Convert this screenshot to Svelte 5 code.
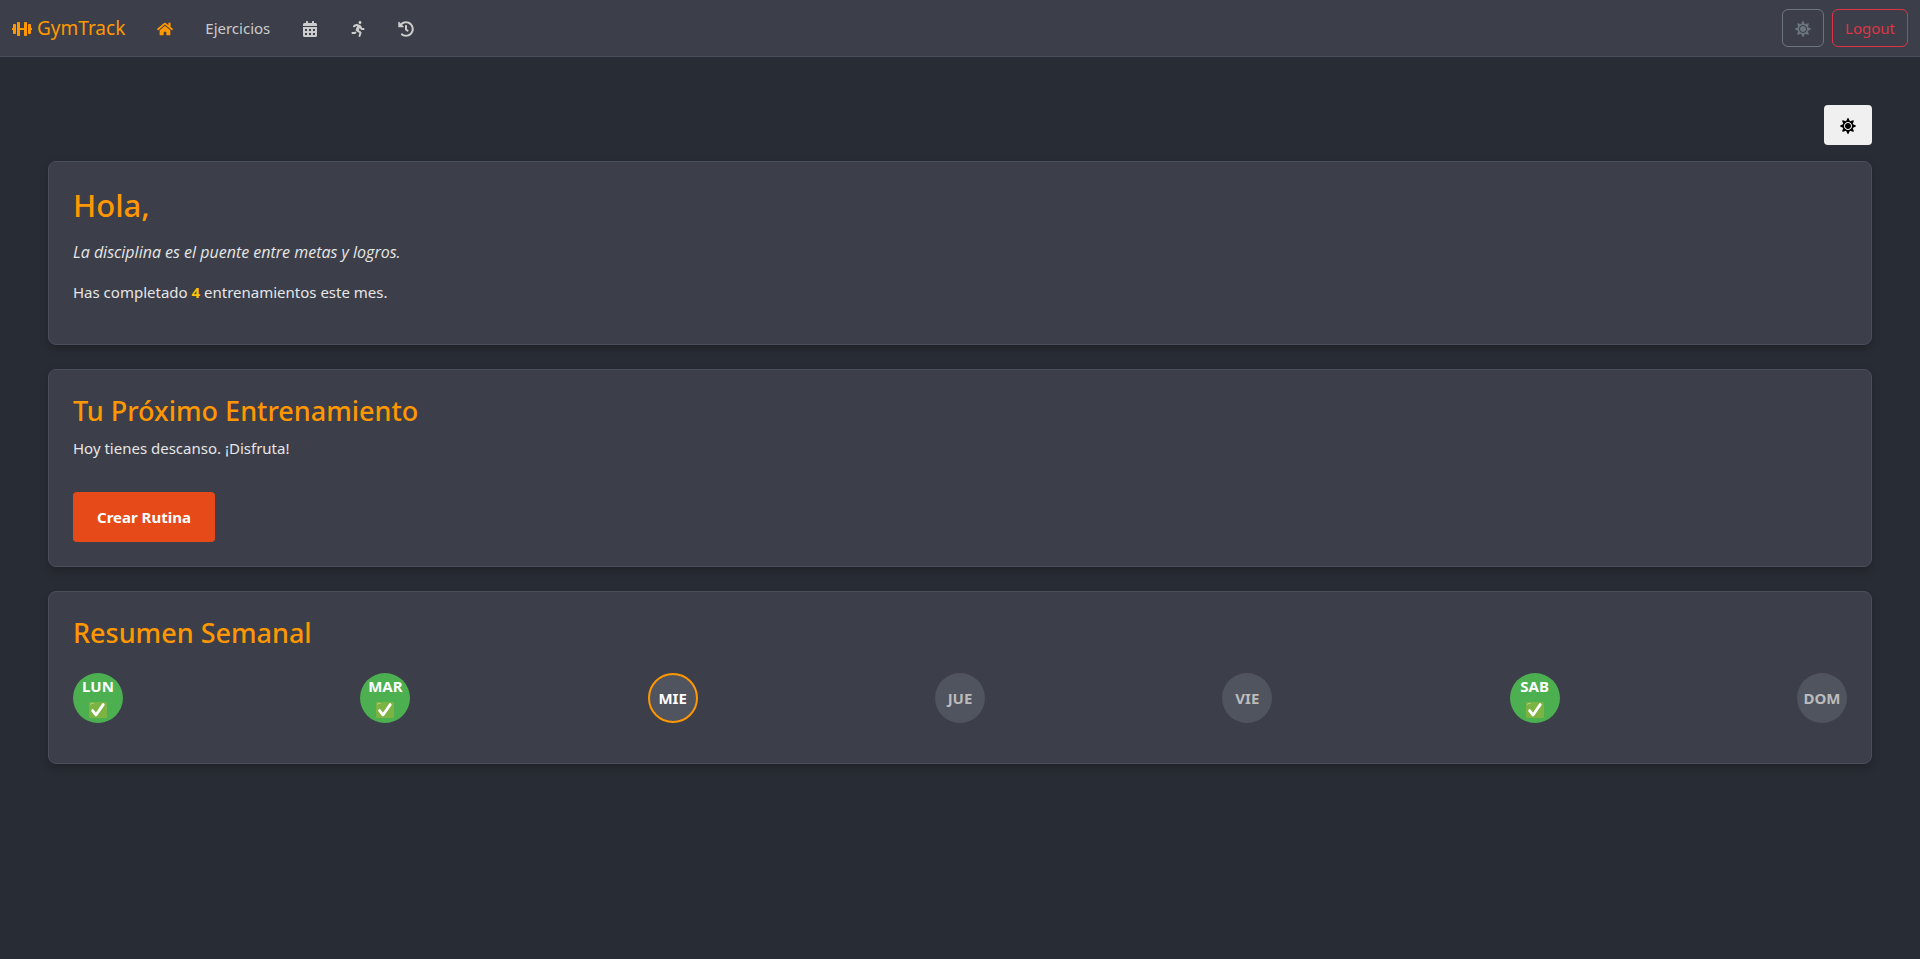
<script>
  const icons = {
    dumbbell: {
      w: 640,
      d: 'M104 96H56c-13.3 0-24 10.7-24 24v104H8c-4.4 0-8 3.6-8 8v48c0 4.4 3.6 8 8 8h24v104c0 13.3 10.7 24 24 24h48c13.3 0 24-10.7 24-24V120c0-13.3-10.7-24-24-24zm528 128h-24V120c0-13.3-10.7-24-24-24h-48c-13.3 0-24 10.7-24 24v272c0 13.3 10.7 24 24 24h48c13.3 0 24-10.7 24-24V288h24c4.4 0 8-3.6 8-8v-48c0-4.4-3.6-8-8-8zM456 32h-48c-13.3 0-24 10.7-24 24v168H256V56c0-13.3-10.7-24-24-24h-48c-13.3 0-24 10.7-24 24v400c0 13.3 10.7 24 24 24h48c13.3 0 24-10.7 24-24V288h128v168c0 13.3 10.7 24 24 24h48c13.3 0 24-10.7 24-24V56c0-13.3-10.7-24-24-24z'
    },
    home: {
      w: 576,
      d: 'M280.37 148.26L96 300.11V464a16 16 0 0 0 16 16l112.06-.29a16 16 0 0 0 15.92-16V368a16 16 0 0 1 16-16h64a16 16 0 0 1 16 16v95.64a16 16 0 0 0 16 16.05L464 480a16 16 0 0 0 16-16V300L295.67 148.26a12.19 12.19 0 0 0-15.3 0zM571.6 251.47L488 182.56V44.05a12 12 0 0 0-12-12h-56a12 12 0 0 0-12 12v72.61L318.47 43a48 48 0 0 0-61 0L4.34 251.47a12 12 0 0 0-1.6 16.9l25.5 31A12 12 0 0 0 45.15 301l235.22-193.74a12.19 12.19 0 0 1 15.3 0L530.9 301a12 12 0 0 0 16.9-1.6l25.5-31a12 12 0 0 0-1.7-16.93z'
    },
    calendar: {
      w: 448,
      d: 'M0 464c0 26.5 21.5 48 48 48h352c26.5 0 48-21.5 48-48V192H0v272zm320-196c0-6.6 5.4-12 12-12h40c6.6 0 12 5.4 12 12v40c0 6.6-5.4 12-12 12h-40c-6.6 0-12-5.4-12-12v-40zm0 128c0-6.6 5.4-12 12-12h40c6.6 0 12 5.4 12 12v40c0 6.6-5.4 12-12 12h-40c-6.6 0-12-5.4-12-12v-40zM192 268c0-6.6 5.4-12 12-12h40c6.6 0 12 5.4 12 12v40c0 6.6-5.4 12-12 12h-40c-6.6 0-12-5.4-12-12v-40zm0 128c0-6.6 5.4-12 12-12h40c6.6 0 12 5.4 12 12v40c0 6.6-5.4 12-12 12h-40c-6.6 0-12-5.4-12-12v-40zM64 268c0-6.6 5.4-12 12-12h40c6.6 0 12 5.4 12 12v40c0 6.6-5.4 12-12 12H76c-6.6 0-12-5.4-12-12v-40zm0 128c0-6.6 5.4-12 12-12h40c6.6 0 12 5.4 12 12v40c0 6.6-5.4 12-12 12H76c-6.6 0-12-5.4-12-12v-40zM400 64h-48V16c0-8.8-7.2-16-16-16h-32c-8.8 0-16 7.2-16 16v48H160V16c0-8.8-7.2-16-16-16h-32c-8.8 0-16 7.2-16 16v48H48C21.5 64 0 85.5 0 112v48h448v-48c0-26.5-21.5-48-48-48z'
    },
    running: {
      w: 416,
      d: 'M272 96c26.51 0 48-21.49 48-48S298.51 0 272 0s-48 21.49-48 48 21.49 48 48 48zM113.69 317.47l-14.8 34.52H32c-17.67 0-32 14.33-32 32s14.33 32 32 32h77.45c19.25 0 36.58-11.44 44.11-29.09l8.79-20.52-10.67-6.3c-17.32-10.23-30.06-25.37-37.99-42.61zM384 223.99h-44.03l-26.06-53.25c-12.5-25.55-35.45-44.23-61.78-50.94l-71.08-21.14c-28.3-6.8-57.77-.55-80.84 17.14l-39.67 30.41c-14.03 10.75-16.69 30.83-5.94 44.86s30.84 16.69 44.86 5.94l39.67-30.41c7.67-5.89 17.44-8 25.27-6.14l14.7 4.37-37.46 87.39c-12.62 29.48-1.31 64.01 26.3 80.31l84.98 50.17-27.47 87.73c-5.28 16.86 4.11 34.82 20.97 40.1 3.19 1 6.41 1.48 9.58 1.48 13.61 0 26.23-8.77 30.52-22.45l31.64-101.06c5.91-20.77-2.89-43.08-21.64-54.39l-61.24-36.14 31.31-78.28 20.27 41.43c8 16.34 24.92 26.89 43.11 26.89H384c17.67 0 32-14.33 32-32s-14.33-31.99-32-31.99z'
    },
    history: {
      w: 512,
      d: 'M504 255.531c.253 136.64-111.18 248.372-247.82 248.468-59.015.042-113.223-20.53-155.822-54.911-11.077-8.94-11.905-25.541-1.839-35.607l11.267-11.267c8.609-8.609 22.353-9.551 31.891-1.984C173.062 425.135 212.781 440 256 440c101.705 0 184-82.311 184-184 0-101.705-82.311-184-184-184-48.814 0-93.149 18.969-126.068 49.932l50.754 50.754c10.08 10.08 2.941 27.314-11.313 27.314H24c-8.837 0-16-7.163-16-16V38.627c0-14.254 17.234-21.393 27.314-11.314l49.372 49.372C129.209 34.136 189.552 8 256 8c136.81 0 247.747 110.78 248 247.531zm-180.912 78.784l9.823-12.63c8.138-10.463 6.253-25.542-4.21-33.679L288 256.349V152c0-13.255-10.745-24-24-24h-16c-13.255 0-24 10.745-24 24v135.651l65.409 50.874c10.463 8.137 25.541 6.253 33.679-4.21z'
    },
    sun: {
      w: 512,
      d: 'M256 160c-52.9 0-96 43.1-96 96s43.1 96 96 96 96-43.1 96-96-43.1-96-96-96zm246.4 80.5l-94.7-47.3 33.5-100.4c4.5-13.6-8.4-26.5-21.9-21.9l-100.4 33.5-47.4-94.8c-6.4-12.8-24.6-12.8-31 0l-47.3 94.7L92.7 70.8c-13.6-4.5-26.5 8.4-21.9 21.9l33.5 100.4-94.7 47.4c-12.8 6.4-12.8 24.6 0 31l94.7 47.3-33.5 100.5c-4.5 13.6 8.4 26.5 21.9 21.9l100.4-33.5 47.3 94.7c6.4 12.8 24.6 12.8 31 0l47.3-94.7 100.4 33.5c13.6 4.5 26.5-8.4 21.9-21.9l-33.5-100.4 94.7-47.3c13-6.5 13-24.7.2-31.1zm-155.9 106c-49.9 49.9-131.1 49.9-181 0-49.9-49.9-49.9-131.1 0-181 49.9-49.9 131.1-49.9 181 0 49.9 49.9 49.9 131.1 0 181z'
    }
  };

  const completed = 4;
  const days = [
    { name: 'LUN', state: 'done' },
    { name: 'MAR', state: 'done' },
    { name: 'MIE', state: 'today' },
    { name: 'JUE', state: '' },
    { name: 'VIE', state: '' },
    { name: 'SAB', state: 'done' },
    { name: 'DOM', state: '' }
  ];
</script>

{#snippet icon(name, size = 16)}
  <svg class="icon" viewBox="0 0 {icons[name].w} 512" width={size} height={size} aria-hidden="true">
    <path d={icons[name].d} fill="currentColor" />
  </svg>
{/snippet}

<header class="navbar">
  <a class="brand" href="#inicio">{@render icon('dumbbell', 20)}<span>GymTrack</span></a>
  <nav>
    <a class="active" href="#inicio" aria-label="Inicio">{@render icon('home')}</a>
    <a href="#ejercicios">Ejercicios</a>
    <a href="#calendario" aria-label="Calendario">{@render icon('calendar')}</a>
    <a href="#entrenar" aria-label="Entrenar">{@render icon('running')}</a>
    <a href="#historial" aria-label="Historial">{@render icon('history')}</a>
  </nav>
  <div class="actions">
    <button class="outline theme" type="button" aria-label="Tema">{@render icon('sun')}</button>
    <button class="outline logout" type="button">Logout</button>
  </div>
</header>

<main>
  <button class="toggle" type="button" aria-label="Cambiar tema">{@render icon('sun')}</button>

  <section class="card">
    <h1>Hola,</h1>
    <p class="quote">La disciplina es el puente entre metas y logros.</p>
    <p>Has completado <strong>{completed}</strong> entrenamientos este mes.</p>
  </section>

  <section class="card">
    <h2>Tu Próximo Entrenamiento</h2>
    <p>Hoy tienes descanso. ¡Disfruta!</p>
    <button class="create" type="button">Crear Rutina</button>
  </section>

  <section class="card">
    <h2>Resumen Semanal</h2>
    <ul class="week">
      {#each days as day}
        <li class="day {day.state}">
          <span>{day.name}</span>
          {#if day.state === 'done'}
            <svg class="check" viewBox="0 0 18 18" role="img" aria-label="Completado">
              <rect x="0" y="1" width="18" height="16" rx="1" fill="#7cb342" />
              <path d="M1.6 3.4q0-1 1-1h1.6" fill="none" stroke="#aed581" stroke-linecap="round" />
              <path d="M3.6 9.6L7 14L14.2 3.6" fill="none" stroke="#fff" stroke-width="2.8" stroke-linecap="round" stroke-linejoin="round" />
            </svg>
          {/if}
        </li>
      {/each}
    </ul>
  </section>
</main>

<style>
  :global(body) {
    background: #282c34;
    color: #e6e6e6;
    font: 15px/24px 'Noto Sans', 'Open Sans', sans-serif;
  }

  .icon {
    display: block;
    flex: none;
  }

  a {
    color: inherit;
    text-decoration: none;
  }

  button {
    font: inherit;
    cursor: pointer;
  }

  .navbar {
    display: flex;
    align-items: center;
    height: 56px;
    padding: 0 12px;
    background: #3c3f49;
    border-bottom: 1px solid #4b4f5b;
    color: #ccc;
  }

  .brand {
    display: flex;
    align-items: center;
    gap: 5px;
    margin-right: 32px;
    color: #ff9800;
    font-size: 19px;
  }

  nav {
    display: flex;
    align-items: center;
    gap: 32px;
  }

  nav .active {
    color: #ff9800;
  }

  .brand .icon,
  nav .icon,
  .theme .icon,
  .toggle .icon {
    margin-top: 2px;
  }

  .actions {
    display: flex;
    gap: 8px;
    margin-left: auto;
  }

  .outline {
    height: 38px;
    padding: 0 12px;
    background: transparent;
    border: 1px solid;
    border-radius: 6px;
  }

  .theme {
    color: #6c757d;
  }

  .logout {
    color: #dc3545;
  }

  main {
    display: flex;
    flex-direction: column;
    gap: 24px;
    padding: 48px;
  }

  .toggle {
    align-self: flex-end;
    height: 40px;
    padding: 0 16px;
    margin-bottom: -8px;
    background: #f0f0f0;
    border: 0;
    border-radius: 4px;
    color: #000;
  }

  .card {
    padding: 24px;
    background: #3c3f49;
    border: 1px solid #4b4f5b;
    border-radius: 8px;
    box-shadow: 0 4px 8px rgba(0, 0, 0, 0.2);
  }

  h1,
  h2 {
    margin: 0;
    color: #ff9800;
    font-weight: 500;
  }

  h1 {
    margin-bottom: 16px;
    font-size: 31px;
    line-height: 38px;
  }

  h2 {
    margin-bottom: 8px;
    font-size: 27px;
    line-height: 34px;
  }

  p {
    margin: 0 0 16px;
  }

  .quote {
    font-family: 'Open Sans', 'Noto Sans', sans-serif;
    font-size: 16px;
    font-style: italic;
  }

  strong {
    color: #ffc107;
  }

  .create {
    display: block;
    height: 50px;
    padding: 0 24px;
    margin-top: 32px;
    background: #e64a19;
    border: 0;
    border-radius: 4px;
    color: #fff;
    font-weight: 700;
  }

  .week {
    display: flex;
    justify-content: space-between;
    margin: 23px 0 16px;
    padding: 0;
    list-style: none;
  }

  .day {
    display: flex;
    flex-direction: column;
    align-items: center;
    justify-content: center;
    box-sizing: border-box;
    width: 50px;
    height: 50px;
    border-radius: 50%;
    background: #50545f;
    color: #bbb;
    font-weight: 700;
  }

  .done {
    background: #4caf50;
    color: #fff;
  }

  .today {
    border: 2px solid #ff9800;
    color: #fff;
  }

  .check {
    width: 18px;
    height: 18px;
    margin: 3px 0;
  }
</style>
